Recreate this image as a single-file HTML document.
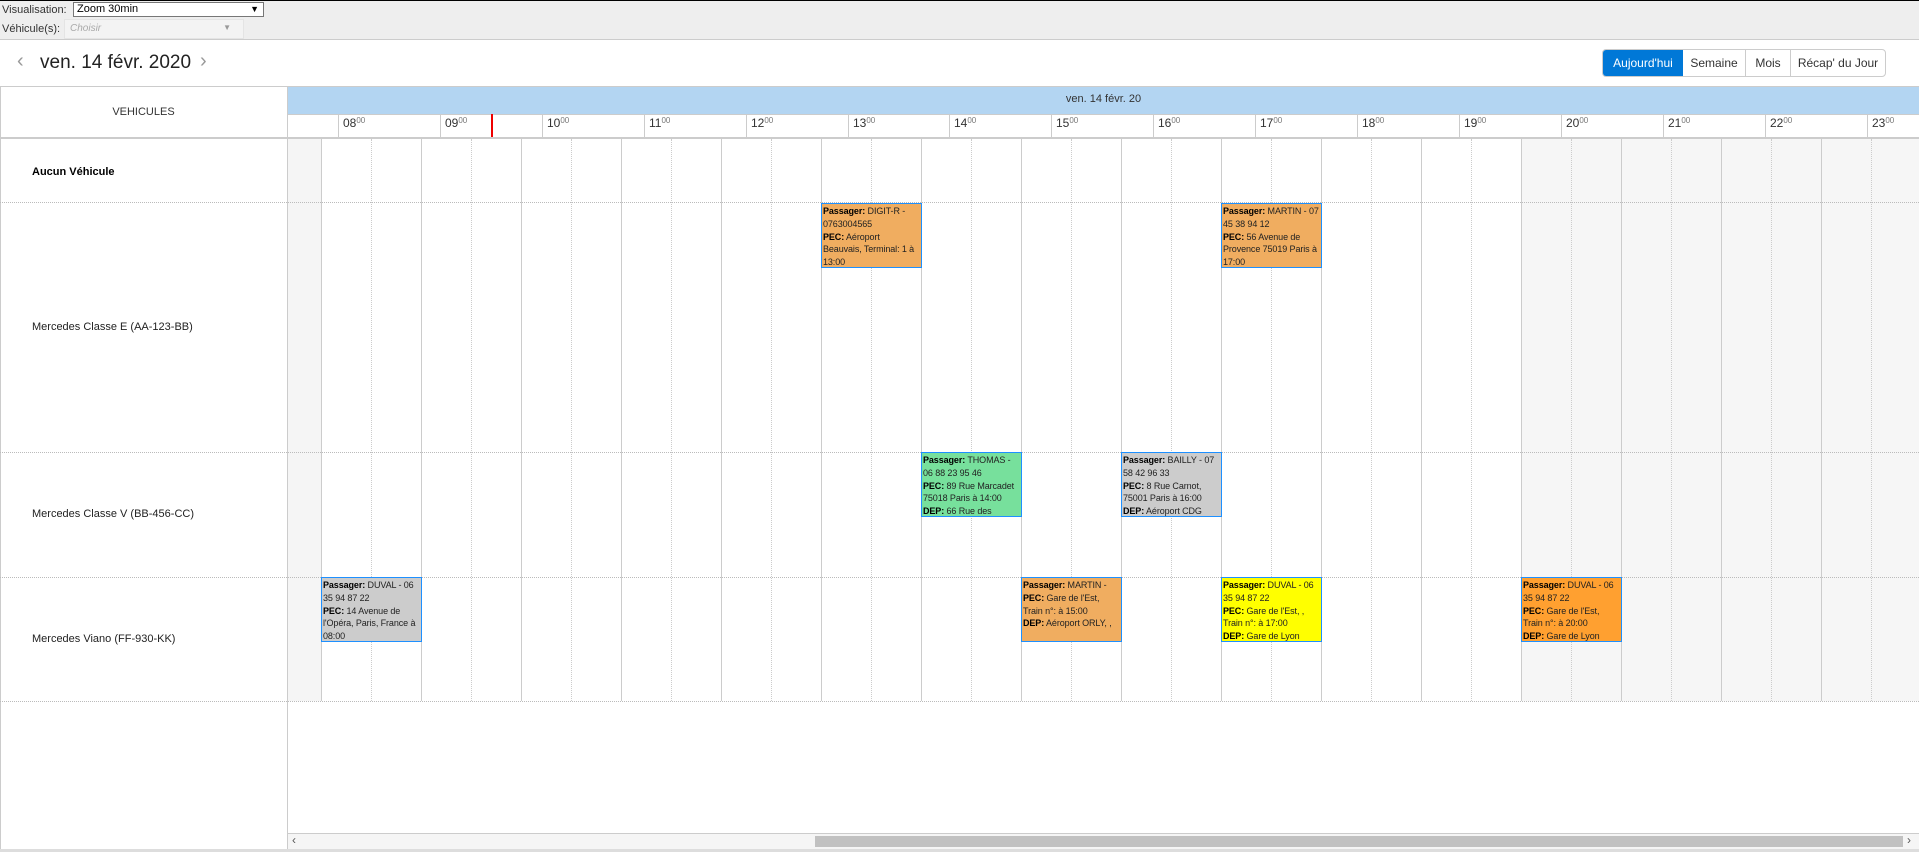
<!DOCTYPE html>
<html><head><meta charset="utf-8"><style>
*{box-sizing:border-box;margin:0;padding:0}
body{width:1919px;height:852px;position:relative;overflow:hidden;background:#fff;font-family:"Liberation Sans",sans-serif;color:#222}
.a{position:absolute}
.ev{position:absolute;width:101px;height:65px;border:1px solid #1e90ff;font-size:9px;line-height:12.8px;padding:1px 1px;overflow:hidden;color:#222;letter-spacing:-0.1px}
.ev b{color:#000}
.hr{position:absolute;top:116px;font-size:12px;color:#333}
.hr sup{font-size:8px;color:#777;vertical-align:4px}
.lbl{position:absolute;left:32px;font-size:11px;color:#222}
</style></head><body>
<div class="a" style="left:0;top:0;width:1919px;height:40px;background:#eee;border-top:1px solid #000;border-bottom:1px solid #ccc"></div>
<div class="a" style="left:2px;top:4px;font-size:11px;color:#333">Visualisation:</div>
<div class="a" style="left:73px;top:2px;width:191px;height:15px;background:#fff;border:1px solid #777;font-size:11px;padding-left:3px;line-height:13px;color:#000">Zoom 30min<span style="position:absolute;right:4px;font-size:9px">▼</span></div>
<div class="a" style="left:2px;top:23px;font-size:11px;color:#333">Véhicule(s):</div>
<div class="a" style="left:64px;top:19px;width:180px;height:20px;background:#f3f3f3;border:1px solid #e4e4e4;font-size:10px;font-style:italic;color:#aaa;padding:3px 5px">Choisir<span style="position:absolute;right:12px;font-style:normal;font-size:8px;color:#999">▼</span></div>

<div class="a" style="left:17px;top:50px;font-size:20px;color:#999">&lsaquo;</div>
<div class="a" style="left:40px;top:52px;font-size:19px;color:#222">ven. 14 févr. 2020</div>
<div class="a" style="left:200px;top:50px;font-size:20px;color:#999">&rsaquo;</div>

<div class="a" style="left:1602px;top:49px;width:284px;height:28px;border:1px solid #ccc;border-radius:4px;font-size:12px;line-height:26px;color:#333;display:flex;overflow:hidden">
<div style="width:80px;background:#0078d7;color:#fff;text-align:center">Aujourd'hui</div>
<div style="width:63px;text-align:center;border-right:1px solid #ccc">Semaine</div>
<div style="width:45px;text-align:center;border-right:1px solid #ccc">Mois</div>
<div style="flex:1;text-align:center">Récap' du Jour</div></div>

<div class="a" style="left:0;top:86px;width:1919px;height:1px;background:#ccc"></div>
<div class="a" style="left:0;top:86px;width:1px;height:766px;background:#ccc"></div>
<div class="a" style="left:287px;top:86px;width:1px;height:766px;background:#ccc"></div>
<div class="a" style="left:0;top:137px;width:287px;height:2px;background:#ccc"></div>
<div class="a" style="left:0;top:106px;width:287px;text-align:center;font-size:11px;color:#333">VEHICULES</div>
<div class="a" style="left:288px;top:87px;width:1631px;height:27px;background:#b3d5f2;text-align:center;font-size:11px;line-height:24px;color:#333">ven. 14 févr. 20</div>
<div class="a" style="left:288px;top:114px;width:1631px;height:1px;background:#ccc"></div>
<div class="a" style="left:288px;top:137px;width:1631px;height:2px;background:#ccc"></div>
<div id="hd"></div>
<div class="a" style="left:491px;top:114px;width:2px;height:23px;background:#e00"></div>

<div class="a" style="left:288px;top:139px;width:33px;height:562px;background:#f5f5f5"></div>
<div class="a" style="left:1521px;top:139px;width:398px;height:562px;background:#f6f6f6"></div>
<div id="gr"></div>

<div class="lbl" style="top:166px;font-weight:bold;color:#000">Aucun Véhicule</div>
<div class="lbl" style="top:321px">Mercedes Classe E (AA-123-BB)</div>
<div class="lbl" style="top:508px">Mercedes Classe V (BB-456-CC)</div>
<div class="lbl" style="top:633px">Mercedes Viano (FF-930-KK)</div>

<div class="ev" style="left:821px;top:203px;background:#f0ad60"><b>Passager:</b> DIGIT-R - 0763004565<br><b>PEC:</b> Aéroport Beauvais, Terminal: 1 à 13:00</div>
<div class="ev" style="left:1221px;top:203px;background:#f0ad60"><b>Passager:</b> MARTIN - 07 45 38 94 12<br><b>PEC:</b> 56 Avenue de Provence 75019 Paris à 17:00</div>
<div class="ev" style="left:921px;top:452px;background:#77e09c"><b>Passager:</b> THOMAS - 06 88 23 95 46<br><b>PEC:</b> 89 Rue Marcadet 75018 Paris à 14:00<br><b>DEP:</b> 66 Rue des</div>
<div class="ev" style="left:1121px;top:452px;background:#ccc"><b>Passager:</b> BAILLY - 07 58 42 96 33<br><b>PEC:</b> 8 Rue Carnot, 75001 Paris à 16:00<br><b>DEP:</b> Aéroport CDG</div>
<div class="ev" style="left:321px;top:577px;background:#ccc"><b>Passager:</b> DUVAL - 06 35 94 87 22<br><b>PEC:</b> 14 Avenue de l'Opéra, Paris, France à 08:00</div>
<div class="ev" style="left:1021px;top:577px;background:#f0ad60"><b>Passager:</b> MARTIN - <br><b>PEC:</b> Gare de l'Est, Train n°: à 15:00<br><b>DEP:</b> Aéroport ORLY, ,</div>
<div class="ev" style="left:1221px;top:577px;background:#ffff00"><b>Passager:</b> DUVAL - 06 35 94 87 22<br><b>PEC:</b> Gare de l'Est, , Train n°: à 17:00<br><b>DEP:</b> Gare de Lyon</div>
<div class="ev" style="left:1521px;top:577px;background:#ffa030"><b>Passager:</b> DUVAL - 06 35 94 87 22<br><b>PEC:</b> Gare de l'Est, Train n°: à 20:00<br><b>DEP:</b> Gare de Lyon</div>

<div class="a" style="left:288px;top:833px;width:1631px;height:16px;background:#f5f5f5;border-top:1px solid #ccc"></div>
<div class="a" style="left:292px;top:833px;font-size:12px;color:#555">&lsaquo;</div>
<div class="a" style="left:815px;top:836px;width:1088px;height:11px;background:#c1c1c1"></div>
<div class="a" style="left:1907px;top:833px;font-size:12px;color:#555">&rsaquo;</div>
<div class="a" style="left:0;top:849px;width:1919px;height:3px;background:#ddd"></div>

<script>
var h='',g='';
for(var i=0;i<16;i++){var x=Math.round(338+i*101.9);
h+='<div class="a" style="left:'+x+'px;top:114px;width:1px;height:23px;background:#ccc"></div><div class="hr" style="left:'+(x+5)+'px">'+String(i+8).padStart(2,'0')+'<sup>00</sup></div>';}
document.getElementById('hd').innerHTML=h;
for(var i=0;i<32;i++){var x=321+i*50;if(x>1919)break;
g+=i%2==0?'<div class="a" style="left:'+x+'px;top:139px;width:1px;height:562px;background:#ccc"></div>':'<div class="a" style="left:'+x+'px;top:139px;width:0;height:562px;border-left:1px dotted #ccc"></div>';}
[202,452,577,701].forEach(function(y){g+='<div class="a" style="left:0;top:'+y+'px;width:1919px;height:0;border-top:1px dotted #bbb"></div>';});
document.getElementById('gr').innerHTML=g;
</script>
</body></html>
